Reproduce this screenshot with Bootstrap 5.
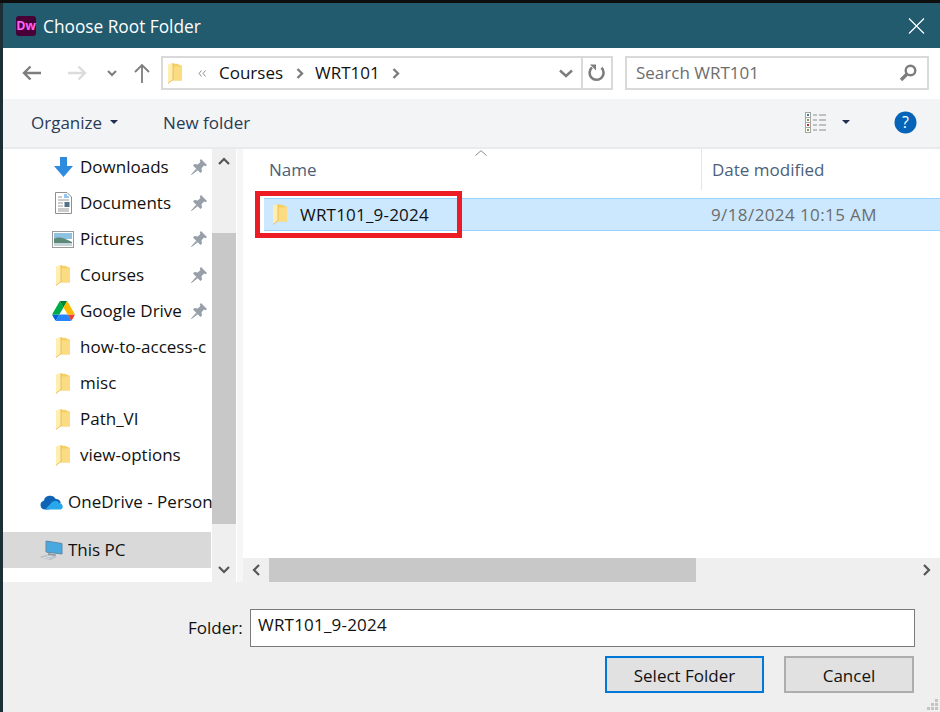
<!DOCTYPE html>
<html lang="en">
<head>
    <meta charset="UTF-8">
    <meta name="viewport" content="width=device-width, initial-scale=1.0">
    <title>Choose Root Folder</title>
    <link href="https://cdn.jsdelivr.net/npm/bootstrap@5.3.0/dist/css/bootstrap.min.css" rel="stylesheet">
    <style>
        html, body {
            height: 100%;
            overflow: hidden;
        }
        body {
            background-color: #1d2f36;
            border-top: 3px solid #0e0e0e;
            padding-left: 3px;
            font-family: "Open Sans", "Noto Sans", sans-serif;
            font-size: 17px;
            color: #111;
        }
        .dlg {
            height: 709px;
            background-color: #fff;
        }
        .title-bar {
            height: 45px;
            flex: none;
            background-color: #225a6e;
            color: #fff;
            padding: 0 15px 0 13px;
        }
        .title-text {
            font-size: 17.3px;
            padding-top: 3px;
        }
        .dw-logo {
            width: 20px;
            height: 20px;
            margin-right: 7px;
            border-radius: 3px;
            background-color: #470137;
            color: #ff61f6;
            font-size: 12.5px;
            font-weight: 700;
            line-height: 20px;
            text-align: center;
            letter-spacing: -.3px;
        }
        .nav-bar {
            height: 51px;
            flex: none;
            padding: 8px 11px 9px 0;
        }
        .nav-btns {
            width: 158px;
            padding-left: 19px;
        }
        .addr-box {
            width: 452px;
            height: 34px;
            border: 2px solid #d9d9d9;
        }
        .addr-path {
            padding-left: 5px;
        }
        .addr-end {
            width: 30px;
            border-left: 2px solid #d9d9d9;
        }
        .search-box {
            width: 304px;
            height: 34px;
            margin-left: 12px;
            border: 2px solid #d9d9d9;
            padding: 0 10px 0 9px;
            color: #6d6d6d;
        }
        .tool-bar {
            height: 50px;
            flex: none;
            background-color: #f3f4f6;
            border-bottom: 2px solid #e9eaec;
            padding: 0 23px 2px 28px;
            color: #2a3b55;
        }
        .tool-text {
            padding-top: 2px;
        }
        .main-pane {
            height: 433px;
            flex: none;
        }
        .side-list {
            width: 209px;
            flex: none;
            overflow: hidden;
        }
        .side-row {
            height: 36px;
            white-space: nowrap;
        }
        .side-row-sub {
            padding-left: 47px;
        }
        .side-row-root {
            padding-left: 36px;
        }
        .side-row-gap {
            margin-top: 11px;
        }
        .side-row-on {
            background-color: #d9d9d9;
            margin-top: 12px;
            margin-right: 1px;
        }
        .side-ico {
            width: 26px;
            flex: none;
            margin-right: 4px;
            display: flex;
            justify-content: center;
        }
        .side-row-root .side-ico {
            width: 24px;
            margin-right: 5px;
        }
        .side-text {
            flex-grow: 1;
            overflow: hidden;
        }
        .side-pin {
            flex: none;
            margin-right: 5px;
        }
        .v-scroll {
            width: 24px;
            flex: none;
            background-color: #efefef;
        }
        .scroll-btn {
            height: 24px;
            flex: none;
        }
        .v-gap {
            height: 60px;
            flex: none;
        }
        .v-thumb {
            height: 291px;
            flex: none;
            background-color: #c8c8c8;
        }
        .v-split {
            width: 7px;
            flex: none;
            border-left: 1px solid #fff;
            background-color: #f6f6f6;
        }
        .list-head {
            height: 41px;
            flex: none;
            color: #4c607a;
        }
        .col-name {
            width: 458px;
            flex: none;
            padding-left: 26px;
        }
        .col-date {
            padding-left: 10px;
            border-left: 1px solid #e5e5e5;
            height: 41px;
        }
        .sort-mark {
            position: absolute;
            left: 232px;
            top: 1px;
        }
        .file-row {
            height: 33px;
            margin: 8px 0 0 21px;
            background-color: #cce8ff;
            border-top: 1px solid #99d1ff;
            border-bottom: 1px solid #99d1ff;
        }
        .file-name {
            width: 447px;
            flex: none;
            padding-left: 9px;
            color: #111;
        }
        .file-name svg {
            margin-right: 13px;
        }
        .name-text {
            letter-spacing: .2px;
        }
        .file-date {
            color: #6d6d6d;
            letter-spacing: .4px;
        }
        .red-mark {
            position: absolute;
            left: 12px;
            top: 42px;
            width: 207px;
            height: 47px;
            border: 5px solid #ed1c24;
        }
        .h-scroll {
            height: 24px;
            flex: none;
            background-color: #efefef;
        }
        .h-btn {
            width: 26px;
            flex: none;
        }
        .h-thumb {
            width: 427px;
            flex: none;
            height: 24px;
            background-color: #c8c8c8;
        }
        .foot-pane {
            height: 130px;
            flex: none;
            background-color: #efefef;
        }
        .folder-row {
            padding: 27px 0 0 185px;
        }
        .folder-label {
            width: 62px;
            flex: none;
            padding-top: 6px;
        }
        .folder-input {
            width: 665px;
            height: 38px;
            border: 1px solid #7a7a7a;
            border-radius: 0;
            background-color: #fff;
            padding: 0 7px 8px;
            font-size: 17px;
            letter-spacing: .2px;
            color: #111;
        }
        .btn-row {
            padding: 9px 0 0 602px;
            gap: 20px;
        }
        .win-btn {
            height: 37px;
            border: 2px solid #adadad;
            border-radius: 0;
            background-color: #e1e1e1;
            padding: 3px 0 0;
            font-size: 17px;
            color: #111;
        }
        .win-btn-main {
            width: 159px;
            border-color: #0078d7;
        }
        .win-btn-alt {
            width: 130px;
        }
        .grip {
            position: absolute;
            right: 2px;
            bottom: 2px;
        }
    </style>
</head>
<body>
    <svg width="0" height="0" class="position-absolute">
        <symbol id="folder" viewBox="0 0 14 21">
            <path d="M4 .8 H9 L14 3 V17.500 H4 Z" fill="#f6cf62"/>
            <path d="M5 3.500 H14 V17.500 H5 Z" fill="#fbdc82"/>
            <path d="M0 1.500 L5 0 V16.500 L0 20.500 Z" fill="#ffeeb0"/>
            <path d="M5 0 V16.500 L0 20.500" fill="none" stroke="#e2b44a" stroke-width=".8"/>
        </symbol>
        <symbol id="pin" viewBox="0 0 16 16">
            <path d="M10 0 L16 6 L14.500 7.200 L13 6.600 L10.500 9.200 L11 12.500 L9.500 14 L2 6.500 L3.500 5 L6.800 5.500 L9.400 3 L8.800 1.500 Z" fill="#97a0a8"/>
            <path d="M5.500 10 L.5 15.500 L6.500 11 Z" fill="#97a0a8" stroke="#97a0a8"/>
        </symbol>
    </svg>

    <div class="dlg d-flex flex-column">
        <div class="title-bar d-flex align-items-center">
            <div class="dw-logo">Dw</div>
            <div class="title-text flex-grow-1">Choose Root Folder</div>
            <svg width="17" height="16" viewBox="0 0 17 16"><path d="M1 .5 L16 15.500 M16 .5 L1 15.500" stroke="#fff" stroke-width="1.200"/></svg>
        </div>

        <div class="nav-bar d-flex">
            <div class="nav-btns d-flex align-items-center">
                <svg width="20" height="16" viewBox="0 0 20 16"><path d="M19 8 H2 M8.500 1.500 L2 8 L8.500 14.500" fill="none" stroke="#7d7d7d" stroke-width="2.400"/></svg>
                <svg width="20" height="16" viewBox="0 0 20 16" style="margin-left:25px"><path d="M1 8 H18 M11.500 1.500 L18 8 L11.500 14.500" fill="none" stroke="#dcdcdc" stroke-width="2.400"/></svg>
                <svg width="10" height="7" viewBox="0 0 10 7" style="margin-left:20px"><path d="M1 1 L5 5 L9 1" fill="none" stroke="#7d7d7d" stroke-width="2"/></svg>
                <svg width="16" height="20" viewBox="0 0 16 20" style="margin-left:17px"><path d="M8 20 V2 M1 9 L8 2 L15 9" fill="none" stroke="#7d7d7d" stroke-width="1.800"/></svg>
            </div>
            <div class="addr-box d-flex align-items-center">
                <div class="addr-path d-flex align-items-center flex-grow-1">
                    <svg width="14" height="21"><use href="#folder"/></svg>
                    <svg width="8" height="7" viewBox="0 0 8 7" style="margin:0 13px 0 16px"><path d="M3.500 .5 L1 3.500 L3.500 6.500 M7.500 .5 L5 3.500 L7.500 6.500" fill="none" stroke="#8a8a8a"/></svg>
                    <span>Courses</span>
                    <svg width="8" height="11" viewBox="0 0 8 11" style="margin:0 11px 0 13px"><path d="M1.500 1 L6 5.500 L1.500 10" fill="none" stroke="#7d7d7d" stroke-width="2.400"/></svg>
                    <span>WRT101</span>
                    <svg width="8" height="11" viewBox="0 0 8 11" style="margin-left:12px"><path d="M1.500 1 L6 5.500 L1.500 10" fill="none" stroke="#7d7d7d" stroke-width="2.400"/></svg>
                </div>
                <svg width="14" height="9" viewBox="0 0 14 9" class="me-1"><path d="M1 1.500 L7 7 L13 1.500" fill="none" stroke="#7d7d7d" stroke-width="2.400"/></svg>
                <div class="addr-end d-flex align-items-center justify-content-center h-100 ms-1">
                    <svg width="18" height="18" viewBox="0 0 18 18"><path d="M4 3.500 A7 7 0 1 0 13.500 3.800" fill="none" stroke="#7d7d7d" stroke-width="2.600"/><path d="M2 .5 H8 V6.500 Z" fill="#7d7d7d"/></svg>
                </div>
            </div>
            <div class="search-box d-flex align-items-center justify-content-between">
                <span>Search WRT101</span>
                <svg width="18" height="18" viewBox="0 0 18 18"><circle cx="11.500" cy="6.500" r="4.800" fill="none" stroke="#7d7d7d" stroke-width="2.400"/><path d="M8 10 L2 16" stroke="#7d7d7d" stroke-width="3.400"/></svg>
            </div>
        </div>

        <div class="tool-bar d-flex align-items-center">
            <span class="tool-text">Organize</span>
            <svg width="8" height="4" viewBox="0 0 8 4" class="ms-2"><path d="M0 0 H8 L4 4 Z" fill="#1f2f4d"/></svg>
            <span class="tool-text" style="margin-left:45px">New folder</span>
            <svg width="22" height="21" viewBox="0 0 22 21" class="ms-auto">
                <rect x=".5" y=".5" width="5" height="20" fill="#fff" stroke="#a5a5a5"/>
                <path d="M.5 5.500 H5.500 M.5 10.500 H5.500 M.5 15.500 H5.500" stroke="#a5a5a5"/>
                <rect x="2" y="2" width="2" height="2" fill="#3a7ea8"/><rect x="2" y="7" width="2" height="2" fill="#7d9a4a"/><rect x="2" y="12" width="2" height="2" fill="#b03020"/><rect x="2" y="17" width="2" height="2" fill="#8a9a4a"/>
                <path d="M8 3 H12 M14 3 H21 M8 8 H12 M14 8 H21 M8 13 H12 M14 13 H21 M8 18 H12 M14 18 H21" stroke="#8c8c8c"/>
            </svg>
            <svg width="8" height="4" viewBox="0 0 8 4" style="margin-left:15px"><path d="M0 0 H8 L4 4 Z" fill="#1f2f4d"/></svg>
            <svg width="23" height="23" viewBox="0 0 23 23" style="margin-left:44px"><circle cx="11.500" cy="11.500" r="11" fill="#0563b8"/><text x="11.500" y="17" text-anchor="middle" fill="#fff" font-family="Open Sans" font-size="16">?</text></svg>
        </div>

        <div class="main-pane d-flex">
            <div class="side-list d-flex flex-column">
                <div class="side-row side-row-sub d-flex align-items-center">
                    <div class="side-ico"><svg width="19" height="20" viewBox="0 0 19 20"><path d="M6 0 H13 V9 H19 L9.500 20 L0 9 H6 Z" fill="#2f8be0"/></svg></div>
                    <div class="side-text">Downloads</div>
                    <svg class="side-pin" width="16" height="16"><use href="#pin"/></svg>
                </div>
                <div class="side-row side-row-sub d-flex align-items-center">
                    <div class="side-ico"><svg width="17" height="22" viewBox="0 0 17 22"><path d="M.5 .5 H12 L16.500 5 V21.500 H.5 Z" fill="#fff" stroke="#8f8f8f"/><path d="M3 5 H7 M3 8 H14 M3 17 H14 M3 19 H14 M3 11 H8 M3 14 H8" stroke="#9a9a9a"/><path d="M9 3 H12 M9 5 H14" stroke="#2f8be0"/><rect x="9.500" y="10" width="5" height="5" fill="#50738a"/></svg></div>
                    <div class="side-text">Documents</div>
                    <svg class="side-pin" width="16" height="16"><use href="#pin"/></svg>
                </div>
                <div class="side-row side-row-sub d-flex align-items-center">
                    <div class="side-ico"><svg width="22" height="17" viewBox="0 0 22 17"><rect x=".5" y=".5" width="21" height="16" fill="#fff" stroke="#9a9a9a"/><rect x="2" y="2" width="18" height="6" fill="#8fc1e0"/><path d="M2 8 C7 5 12 7 20 11 V15 H2 Z" fill="#5d8a78"/><rect x="2" y="12" width="18" height="3" fill="#c6d5d8"/></svg></div>
                    <div class="side-text">Pictures</div>
                    <svg class="side-pin" width="16" height="16"><use href="#pin"/></svg>
                </div>
                <div class="side-row side-row-sub d-flex align-items-center">
                    <div class="side-ico"><svg width="14" height="21"><use href="#folder"/></svg></div>
                    <div class="side-text">Courses</div>
                    <svg class="side-pin" width="16" height="16"><use href="#pin"/></svg>
                </div>
                <div class="side-row side-row-sub d-flex align-items-center">
                    <div class="side-ico"><svg width="23" height="20" viewBox="0 0 87.300 78">
                        <path d="m6.600 66.850 3.850 6.650c.8 1.400 1.950 2.500 3.300 3.300l13.750-23.800h-27.500c0 1.550.4 3.100 1.200 4.500z" fill="#0066da"/>
                        <path d="m43.650 25-13.750-23.800c-1.350.8-2.500 1.900-3.300 3.300l-25.400 44a9.060 9.060 0 0 0 -1.200 4.500h27.500z" fill="#00ac47"/>
                        <path d="m73.550 76.800c1.350-.8 2.500-1.900 3.300-3.300l1.600-2.750 7.650-13.250c.8-1.400 1.200-2.950 1.200-4.500h-27.502l5.852 11.500z" fill="#ea4335"/>
                        <path d="m43.650 25 13.750-23.800c-1.350-.8-2.900-1.200-4.500-1.200h-18.500c-1.600 0-3.150.45-4.500 1.200z" fill="#00832d"/>
                        <path d="m59.800 53h-32.300l-13.750 23.800c1.350.8 2.900 1.200 4.500 1.200h50.800c1.600 0 3.150-.45 4.500-1.200z" fill="#2684fc"/>
                        <path d="m73.400 26.500-12.700-22c-.8-1.400-1.950-2.500-3.300-3.300l-13.750 23.800 16.150 28h27.450c0-1.550-.4-3.100-1.200-4.500z" fill="#ffba00"/>
                    </svg></div>
                    <div class="side-text">Google Drive</div>
                    <svg class="side-pin" width="16" height="16"><use href="#pin"/></svg>
                </div>
                <div class="side-row side-row-sub d-flex align-items-center">
                    <div class="side-ico"><svg width="14" height="21"><use href="#folder"/></svg></div>
                    <div class="side-text">how-to-access-c</div>
                </div>
                <div class="side-row side-row-sub d-flex align-items-center">
                    <div class="side-ico"><svg width="14" height="21"><use href="#folder"/></svg></div>
                    <div class="side-text">misc</div>
                </div>
                <div class="side-row side-row-sub d-flex align-items-center">
                    <div class="side-ico"><svg width="14" height="21"><use href="#folder"/></svg></div>
                    <div class="side-text">Path_VI</div>
                </div>
                <div class="side-row side-row-sub d-flex align-items-center">
                    <div class="side-ico"><svg width="14" height="21"><use href="#folder"/></svg></div>
                    <div class="side-text">view-options</div>
                </div>
                <div class="side-row side-row-root side-row-gap d-flex align-items-center">
                    <div class="side-ico"><svg width="24" height="16" viewBox="0 0 22.500 16"><path d="M5 15.500 A4.500 4.500 0 0 1 4 6.700 A6.500 6.500 0 0 1 16 5 A5 5 0 0 1 21 9 L9 15.500 Z" fill="#0f63b5"/><path d="M5.500 15.500 L11 9.500 A5 5 0 0 1 19.500 9 A3.400 3.400 0 0 1 21 15.500 Z" fill="#28a8ea"/></svg></div>
                    <div class="side-text">OneDrive - Person</div>
                </div>
                <div class="side-row side-row-root side-row-on d-flex align-items-center">
                    <div class="side-ico"><svg width="24" height="20" viewBox="0 0 24 20"><path d="M7 1 L23 3.500 V14 L7 12 Z" fill="#4aa8e0" stroke="#5d8aa8"/><path d="M9 13 L17 14.500 V16 L9 15 Z" fill="#8a9aa6"/><path d="M.5 17 L8 14.500 L18 17 L11 20 Z" fill="#b4bdc3"/><path d="M4 17 L11 18.500 M7 15.800 L14 17.300" stroke="#eef1f3" stroke-width=".7"/></svg></div>
                    <div class="side-text">This PC</div>
                </div>
            </div>
            <div class="v-scroll d-flex flex-column">
                <div class="scroll-btn d-flex align-items-center justify-content-center">
                    <svg width="12" height="8" viewBox="0 0 12 8"><path d="M1 7 L6 2 L11 7" fill="none" stroke="#555" stroke-width="2.200"/></svg>
                </div>
                <div class="v-gap"></div>
                <div class="v-thumb"></div>
                <div class="flex-grow-1"></div>
                <div class="scroll-btn d-flex align-items-center justify-content-center">
                    <svg width="12" height="8" viewBox="0 0 12 8"><path d="M1 1 L6 6 L11 1" fill="none" stroke="#555" stroke-width="2.200"/></svg>
                </div>
            </div>
            <div class="v-split"></div>
            <div class="flex-grow-1 d-flex flex-column position-relative">
                <div class="list-head d-flex">
                    <div class="col-name d-flex align-items-center">Name</div>
                    <div class="col-date d-flex align-items-center">Date modified</div>
                </div>
                <svg class="sort-mark" width="12" height="6" viewBox="0 0 12 6"><path d="M.5 5.500 L6 .7 L11.500 5.500" fill="none" stroke="#8c8c8c"/></svg>
                <div class="flex-grow-1">
                    <div class="file-row d-flex align-items-center">
                        <div class="file-name d-flex align-items-center">
                            <svg width="14" height="21"><use href="#folder"/></svg>
                            <span class="name-text">WRT101_9-2024</span>
                        </div>
                        <div class="file-date">9/18/2024 10:15 AM</div>
                    </div>
                </div>
                <div class="red-mark"></div>
                <div class="h-scroll d-flex align-items-center">
                    <div class="h-btn d-flex justify-content-center">
                        <svg width="8" height="12" viewBox="0 0 8 12"><path d="M7 1 L2 6 L7 11" fill="none" stroke="#555" stroke-width="2.200"/></svg>
                    </div>
                    <div class="h-thumb"></div>
                    <div class="ms-auto h-btn d-flex justify-content-center">
                        <svg width="8" height="12" viewBox="0 0 8 12"><path d="M1 1 L6 6 L1 11" fill="none" stroke="#555" stroke-width="2.200"/></svg>
                    </div>
                </div>
            </div>
        </div>

        <div class="foot-pane position-relative">
            <div class="folder-row d-flex">
                <label class="folder-label" for="folderName">Folder:</label>
                <input id="folderName" class="folder-input" type="text" value="WRT101_9-2024">
            </div>
            <div class="btn-row d-flex">
                <button type="button" class="btn win-btn win-btn-main">Select Folder</button>
                <button type="button" class="btn win-btn win-btn-alt">Cancel</button>
            </div>
            <svg class="grip" width="11" height="11" viewBox="0 0 11 11"><path d="M8 0 h3 v3 h-3 z M4 4 h3 v3 h-3 z M8 4 h3 v3 h-3 z M0 8 h3 v3 h-3 z M4 8 h3 v3 h-3 z M8 8 h3 v3 h-3 z" fill="#c4c4c4"/></svg>
        </div>
    </div>

    <script src="https://cdn.jsdelivr.net/npm/bootstrap@5.3.0/dist/js/bootstrap.bundle.min.js"></script>
</body>
</html>
